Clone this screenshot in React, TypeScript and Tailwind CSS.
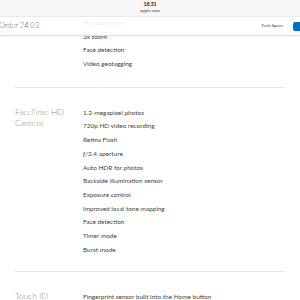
import React from "react";

const font = { fontFamily: "Lato, 'Liberation Sans', sans-serif" };

function Item({ children }: { children: React.ReactNode }) {
  return <div className="h-[13.7px] leading-[13.7px] whitespace-nowrap">{children}</div>;
}

function Section({ label, items, first }: { label?: React.ReactNode; items: string[]; first?: boolean }) {
  return (
    <div className={`grid grid-cols-[68px_1fr] ${first ? "" : "pt-[17.5px]"}`}>
      <div className="pt-[1.5px] text-[8.5px] leading-[10.5px] font-light text-[#888]">{label}</div>
      <div className="text-[6.45px] text-[#444]">
        {items.map((t, i) => (
          <Item key={i}>{t}</Item>
        ))}
      </div>
    </div>
  );
}

export default function App() {
  return (
    <div className="relative w-[300px] h-[300px] overflow-hidden bg-white" style={font}>
      <div className="h-[16px] bg-[#f7f7f7] flex flex-col items-center pt-[1px]">
        <div className="text-[5px] leading-[6px] font-bold text-[#222]">18:31</div>
        <div className="text-[4.5px] leading-[7px] text-[#444]">apple.com</div>
      </div>
      <div className="absolute left-0 top-[16px] w-[300px] h-[19.5px] bg-white/90 border-t border-[#eaeaea] border-b border-b-[#e2e2e2] shadow-[0_1px_1px_rgba(0,0,0,0.04)] flex items-center">
        <div className="ml-[-1px] text-[7.5px] text-[#666] font-light">Order 24.03</div>
        <div className="ml-auto text-[4.5px] text-[#333] mr-[10px] mt-[1px]">Tech Specs</div>
        <div className="w-[10px] h-[9px] rounded-[2px] bg-[#0070c9] mr-[-3px] mt-[1px]" />
      </div>
      <div className="px-[15px]">
        <Section first items={["Playback zoom", "3x zoom", "Face detection", "Video geotagging"]} />
        <div className="mt-[16.5px] h-px bg-[#e6e6e6]" />
        <Section
          label={
            <>
              FaceTime HD
              <br />
              Camera
            </>
          }
          items={[
            "1.2-megapixel photos",
            "720p HD video recording",
            "Retina Flash",
            "ƒ/2.4 aperture",
            "Auto HDR for photos",
            "Backside illumination sensor",
            "Exposure control",
            "Improved local tone mapping",
            "Face detection",
            "Timer mode",
            "Burst mode",
          ]}
        />
        <div className="mt-[15px] h-px bg-[#e6e6e6]" />
        <Section label="Touch ID" items={["Fingerprint sensor built into the Home button"]} />
      </div>
    </div>
  );
}
